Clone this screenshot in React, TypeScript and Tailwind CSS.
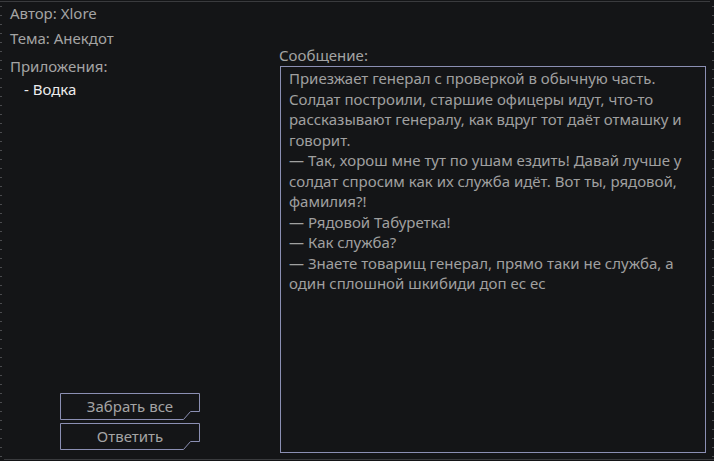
import React from "react";

const message = [
	"Приезжает генерал с проверкой в обычную часть.",
	"Солдат построили, старшие офицеры идут, что-то рассказывают генералу, как вдруг тот даёт отмашку и говорит.",
	"— Так, хорош мне тут по ушам ездить! Давай лучше у солдат спросим как их служба идёт. Вот ты, рядовой, фамилия?!",
	"— Рядовой Табуретка!",
	"— Как служба?",
	"— Знаете товарищ генерал, прямо таки не служба, а один сплошной шкибиди доп ес ес",
];

function NotchButton({ label }: { label: string }) {
	return (
		<button
			type="button"
			className="relative w-[140px] h-[27px] flex items-center justify-center text-[15px] text-[#a4a4a4] leading-none"
		>
			<svg
				className="absolute inset-0"
				width="140"
				height="27"
				viewBox="0 0 140 27"
				fill="none"
			>
				<path
					d="M0.5 0.5 H139.5 V18.5 H130.5 L123.5 26.5 H0.5 Z"
					stroke="#8b8fb3"
					strokeWidth="1"
				/>
			</svg>
			<span className="relative">{label}</span>
		</button>
	);
}

export default function App() {
	return (
		<div
			className="relative w-[714px] h-[461px] overflow-hidden bg-[#141517] text-[15px]"
			style={{ fontFamily: '"Noto Sans", "DejaVu Sans", sans-serif' }}
		>
			{/* frame lines */}
			<div className="absolute left-0 right-[4px] top-[1px] h-px bg-[#3a3b3e]" />
			<div className="absolute left-[4px] right-0 bottom-[1px] h-px bg-[#3a3b3e]" />
			{/* edge ticks */}
			<div className="absolute left-0 top-0 w-[2px] h-full bg-[repeating-linear-gradient(to_bottom,transparent_0px,transparent_6px,#4a4b4e_6px,#4a4b4e_7px,transparent_7px,transparent_9px)]" />
			<div className="absolute right-0 top-0 w-[2px] h-full bg-[repeating-linear-gradient(to_bottom,transparent_0px,transparent_6px,#4a4b4e_6px,#4a4b4e_7px,transparent_7px,transparent_9px)]" />

			<div className="flex h-full">
				<div className="w-[280px] flex flex-col justify-between pl-[10px] pt-[3px] pb-[11px]">
					<div className="flex flex-col leading-[20px] text-[#a4a4a4]">
						<div>Автор: Xlore</div>
						<div className="mt-[5px]">Тема: Анекдот</div>
						<div className="mt-[8px]">Приложения:</div>
						<div className="mt-[3px] pl-[14px] text-[#ececec]">- Водка</div>
					</div>
					<div className="flex flex-col gap-[3px] pl-[50px]">
						<NotchButton label="Забрать все" />
						<NotchButton label="Ответить" />
					</div>
				</div>

				<div className="flex flex-col pt-[45px]">
					<div className="leading-[20px] text-[#a4a4a4] -ml-px">Сообщение:</div>
					<div className="mt-px w-[426px] h-[387px] border border-[#8b8fb3] pl-[8px] pr-[6px] pt-px leading-[20.5px] text-[#a0a0a0]">
						{message.map((line) => (
							<div key={line}>{line}</div>
						))}
					</div>
				</div>
			</div>
		</div>
	);
}
